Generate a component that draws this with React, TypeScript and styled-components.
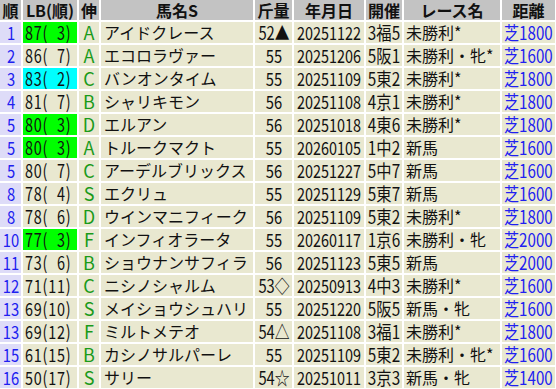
import React from "react";
import styled, { createGlobalStyle, css } from "styled-components";

const Global = createGlobalStyle`
  html, body { margin: 0; padding: 0; background: #ffffff; }
  body { font-family: "Noto Sans CJK JP", "Noto Sans", sans-serif; }
`;

const COLS = "21px 54px 20px 152px 37px 70px 36px 96px 53px";

const Table = styled.div`
  display: flex;
  flex-direction: column;
  gap: 2px;
  width: 556px;
  background: #ffffff;
`;

const Row = styled.div`
  display: grid;
  grid-template-columns: ${COLS};
  gap: 2px;
`;

const HeadCell = styled.div`
  height: 20px;
  line-height: 20px;
  background: #c3c3c3;
  color: #111;
  font-size: 16px;
  font-weight: 700;
  text-align: center;
  white-space: nowrap;
`;

type Kind = "rank" | "lb" | "grade" | "name" | "weight" | "date" | "venue" | "race" | "dist";

const centered: Kind[] = ["rank", "grade", "weight", "date", "venue"];

const Cell = styled.div<{ $kind: Kind; $hl?: string }>`
  height: 21px;
  display: flex;
  align-items: center;
  justify-content: ${(p) => (centered.includes(p.$kind) ? "center" : "flex-start")};
  padding-left: ${(p) => (centered.includes(p.$kind) ? "0" : "3px")};
  color: #111;
  background: #e9e8d0;
  white-space: nowrap;
  ${(p) =>
    p.$kind === "rank" &&
    css`
      background: #dedcf8;
      color: #2020f0;
    `}
  ${(p) =>
    p.$kind === "lb" &&
    css`
      background: ${p.$hl || "#e9e8d0"};
      padding-left: 2px;
    `}
  ${(p) =>
    p.$kind === "grade" &&
    css`
      color: #1a9a1a;
    `}
  ${(p) =>
    p.$kind === "race" &&
    css`
      padding-left: 2px;
    `}
  ${(p) =>
    p.$kind === "dist" &&
    css`
      color: #2020f0;
      padding-left: 2px;
    `}
`;

/* Condensed text: the reference uses a narrow UI face, emulated by a horizontal squeeze */
const Text = styled.span<{ $size: number; $squeeze: number; $origin: string; $track?: number }>`
  display: inline-block;
  flex-shrink: 0;
  font-size: ${(p) => p.$size}px;
  line-height: 21px;
  letter-spacing: ${(p) => p.$track || 0}px;
  transform: scaleX(${(p) => p.$squeeze});
  transform-origin: ${(p) => p.$origin} center;
`;

type Horse = {
  rank: string;
  lb: string;
  hl?: string;
  grade: string;
  name: string;
  weight: string;
  date: string;
  venue: string;
  race: string;
  dist: string;
};

const G = "#00ff00";
const C = "#00ffff";
const F = "\u2007";

const horses: Horse[] = [
  { rank: "1", lb: `87(${F}3)`, hl: G, grade: "A", name: "アイドクレース", weight: "52▲", date: "20251122", venue: "3福5", race: "未勝利*", dist: "芝1800" },
  { rank: "2", lb: `86(${F}7)`, grade: "A", name: "エコロラヴァー", weight: "55", date: "20251206", venue: "5阪1", race: "未勝利・牝*", dist: "芝1600" },
  { rank: "3", lb: `83(${F}2)`, hl: C, grade: "C", name: "バンオンタイム", weight: "55", date: "20251109", venue: "5東2", race: "未勝利*", dist: "芝1800" },
  { rank: "4", lb: `81(${F}7)`, grade: "B", name: "シャリキモン", weight: "56", date: "20251108", venue: "4京1", race: "未勝利*", dist: "芝1800" },
  { rank: "5", lb: `80(${F}3)`, hl: G, grade: "D", name: "エルアン", weight: "56", date: "20251018", venue: "4東6", race: "未勝利*", dist: "芝1800" },
  { rank: "5", lb: `80(${F}3)`, hl: G, grade: "A", name: "トルークマクト", weight: "55", date: "20260105", venue: "1中2", race: "新馬", dist: "芝1600" },
  { rank: "5", lb: `80(${F}7)`, grade: "C", name: "アーデルブリックス", weight: "56", date: "20251227", venue: "5中7", race: "新馬", dist: "芝1600" },
  { rank: "8", lb: `78(${F}4)`, grade: "S", name: "エクリュ", weight: "55", date: "20251129", venue: "5東7", race: "新馬", dist: "芝1600" },
  { rank: "8", lb: `78(${F}6)`, grade: "D", name: "ウインマニフィーク", weight: "56", date: "20251109", venue: "5東2", race: "未勝利*", dist: "芝1800" },
  { rank: "10", lb: `77(${F}3)`, hl: G, grade: "F", name: "インフィオラータ", weight: "55", date: "20260117", venue: "1京6", race: "未勝利・牝", dist: "芝2000" },
  { rank: "11", lb: `73(${F}6)`, grade: "B", name: "ショウナンサフィラ", weight: "56", date: "20251123", venue: "5東5", race: "新馬", dist: "芝2000" },
  { rank: "12", lb: "71(11)", grade: "C", name: "ニシノシャルム", weight: "53◇", date: "20250913", venue: "4中3", race: "未勝利*", dist: "芝1600" },
  { rank: "13", lb: "69(10)", grade: "S", name: "メイショウシュハリ", weight: "55", date: "20251220", venue: "5阪5", race: "新馬・牝", dist: "芝1600" },
  { rank: "13", lb: "69(12)", grade: "F", name: "ミルトメテオ", weight: "54△", date: "20251108", venue: "3福1", race: "未勝利*", dist: "芝1800" },
  { rank: "15", lb: "61(15)", grade: "B", name: "カシノサルパーレ", weight: "55", date: "20251109", venue: "5東2", race: "未勝利・牝*", dist: "芝1600" },
  { rank: "16", lb: "50(17)", grade: "S", name: "サリー", weight: "54☆", date: "20251011", venue: "3京3", race: "新馬・牝", dist: "芝1400" },
];

export default function App() {
  return (
    <>
      <Global />
      <Table>
        <Row>
          <HeadCell>順</HeadCell>
          <HeadCell>LB(順)</HeadCell>
          <HeadCell>伸</HeadCell>
          <HeadCell>馬名S</HeadCell>
          <HeadCell>斤量</HeadCell>
          <HeadCell>年月日</HeadCell>
          <HeadCell>開催</HeadCell>
          <HeadCell>レース名</HeadCell>
          <HeadCell>距離</HeadCell>
        </Row>
        {horses.map((h, i) => (
          <Row key={i}>
            <Cell $kind="rank">
              <Text $size={18} $squeeze={0.82} $origin="center">{h.rank}</Text>
            </Cell>
            <Cell $kind="lb" $hl={h.hl}>
              <Text $size={18} $squeeze={0.8} $origin="left" $track={1}>{h.lb}</Text>
            </Cell>
            <Cell $kind="grade">
              <Text $size={18} $squeeze={1} $origin="center">{h.grade}</Text>
            </Cell>
            <Cell $kind="name">
              <Text $size={16} $squeeze={1} $origin="left">{h.name}</Text>
            </Cell>
            <Cell $kind="weight">
              <Text $size={18} $squeeze={0.82} $origin="center">{h.weight}</Text>
            </Cell>
            <Cell $kind="date">
              <Text $size={18} $squeeze={0.8} $origin="center">{h.date}</Text>
            </Cell>
            <Cell $kind="venue">
              <Text $size={18} $squeeze={0.85} $origin="center">{h.venue}</Text>
            </Cell>
            <Cell $kind="race">
              <Text $size={16} $squeeze={1} $origin="left">{h.race}</Text>
            </Cell>
            <Cell $kind="dist">
              <Text $size={18} $squeeze={0.84} $origin="left">{h.dist}</Text>
            </Cell>
          </Row>
        ))}
      </Table>
    </>
  );
}
